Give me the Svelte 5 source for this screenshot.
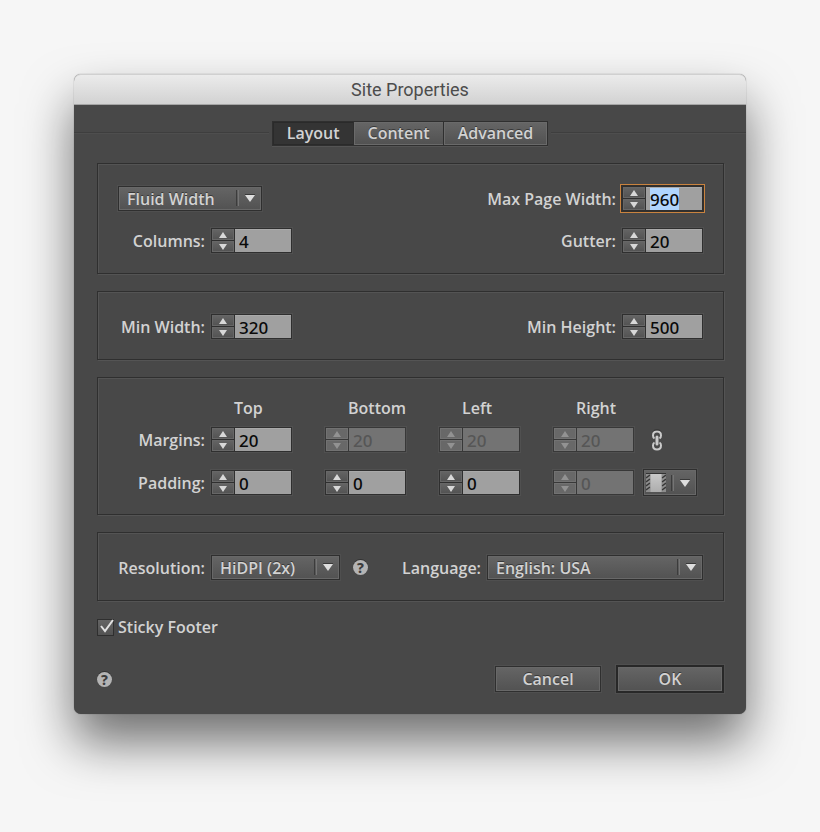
<script lang="ts">
    import { onMount } from "svelte";

    type Edge = {
        name: string;
        margin: number;
        padding: number;
        marginOff: boolean;
        paddingOff: boolean;
    };

    const tabs = ["Layout", "Content", "Advanced"];
    let tab = $state("Layout");

    let page = $state({
        width: "Fluid Width",
        columns: 4,
        maxWidth: 960,
        gutter: 20,
        minWidth: 320,
        minHeight: 500,
        resolution: "HiDPI (2x)",
        language: "English: USA",
        sticky: true,
    });

    let edges: Edge[] = $state([
        { name: "Top", margin: 20, padding: 0, marginOff: false, paddingOff: false },
        { name: "Bottom", margin: 20, padding: 0, marginOff: true, paddingOff: false },
        { name: "Left", margin: 20, padding: 0, marginOff: true, paddingOff: false },
        { name: "Right", margin: 20, padding: 0, marginOff: true, paddingOff: true },
    ]);

    onMount(() => {
        const field = document.getElementById("maxWidth") as HTMLInputElement;
        field.focus();
        field.select();
    });
</script>

{#snippet spinner(id: string, value: number, set: (n: number) => void, disabled = false, label = "")}
    <div class="spinner" class:disabled>
        <div class="steps">
            <button type="button" aria-label="Increase" tabindex="-1" {disabled} onclick={() => set(value + 1)}>
                <svg width="10" height="6" viewBox="0 0 10 6"><path d="M5 0 9 6H1z" /></svg>
            </button>
            <button type="button" aria-label="Decrease" tabindex="-1" {disabled} onclick={() => set(value - 1)}>
                <svg width="10" height="6" viewBox="0 0 10 6"><path d="M5 6 1 0h8z" /></svg>
            </button>
        </div>
        <input
            {id}
            type="text"
            inputmode="numeric"
            autocomplete="off"
            aria-label={label || undefined}
            {value}
            {disabled}
            onchange={(e) => set(Number(e.currentTarget.value) || 0)}
        />
    </div>
{/snippet}

{#snippet arrow()}
    <svg class="arrow" width="22" height="18" viewBox="0 0 22 18" aria-hidden="true">
        <path d="M.5 1v16" stroke="#3c3c3c" />
        <path d="M2.5 1v16" stroke="#757575" />
        <path d="M9 5.500h10" stroke="#393939" />
        <path d="M9 6h10l-5 7z" fill="#dedede" />
    </svg>
{/snippet}

{#snippet help()}
    <button class="help" type="button" aria-label="Help">?</button>
{/snippet}

<main>
    <form class="dialog" aria-labelledby="title" onsubmit={(e) => e.preventDefault()}>
        <header><h1 id="title">Site Properties</h1></header>

        <nav>
            <div class="tabs">
                {#each tabs as name}
                    <button type="button" class:selected={tab === name} onclick={() => (tab = name)}>{name}</button>
                {/each}
            </div>
        </nav>

        <div class="content">
            <section class="panel">
                <div class="row">
                    <div class="select fluid">
                        <select aria-label="Page width" bind:value={page.width}>
                            <option>Fluid Width</option>
                            <option>Fixed Width</option>
                        </select>
                        {@render arrow()}
                    </div>
                    <div class="field">
                        <label for="maxWidth">Max Page Width:</label>
                        {@render spinner("maxWidth", page.maxWidth, (n) => (page.maxWidth = n))}
                    </div>
                </div>
                <div class="row">
                    <div class="field">
                        <label class="first" for="columns">Columns:</label>
                        {@render spinner("columns", page.columns, (n) => (page.columns = n))}
                    </div>
                    <div class="field">
                        <label for="gutter">Gutter:</label>
                        {@render spinner("gutter", page.gutter, (n) => (page.gutter = n))}
                    </div>
                </div>
            </section>

            <section class="panel">
                <div class="row">
                    <div class="field">
                        <label class="first" for="minWidth">Min Width:</label>
                        {@render spinner("minWidth", page.minWidth, (n) => (page.minWidth = n))}
                    </div>
                    <div class="field">
                        <label for="minHeight">Min Height:</label>
                        {@render spinner("minHeight", page.minHeight, (n) => (page.minHeight = n))}
                    </div>
                </div>
            </section>

            <section class="panel">
                <div class="edgeRow heads">
                    <span></span>
                    {#each edges as edge}
                        <span class="head">{edge.name}</span>
                    {/each}
                </div>
                <div class="edgeRow">
                    <label class="first" for="marginTop">Margins:</label>
                    {#each edges as edge}
                        {@render spinner("margin" + edge.name, edge.margin, (n) => (edge.margin = n), edge.marginOff, "Margin " + edge.name)}
                    {/each}
                    <button class="link" type="button" aria-label="Link margins">
                        <svg width="12" height="22" viewBox="0 0 12 22" fill="none" aria-hidden="true">
                            <path
                                d="M3.500 9.500C2.300 8.800 2 8 2 6.500 2 4 3.500 2.500 6 2.500S10 4 10 6.500c0 1.500-.3 2.300-1.500 3M3.500 13.500c-1.200.7-1.500 1.500-1.500 3 0 2.500 1.500 4 4 4s4-1.500 4-4c0-1.500-.3-2.300-1.500-3"
                                stroke="#cacaca"
                                stroke-width="2"
                            />
                            <path d="M6 8v7" stroke="#cacaca" stroke-width="3" stroke-linecap="round" />
                            <path d="M2 2.500C3 1 4.500.8 6 .8s3 .2 4 1.700" stroke="#333" />
                        </svg>
                    </button>
                </div>
                <div class="edgeRow">
                    <label class="first" for="paddingTop">Padding:</label>
                    {#each edges as edge}
                        {@render spinner("padding" + edge.name, edge.padding, (n) => (edge.padding = n), edge.paddingOff, "Padding " + edge.name)}
                    {/each}
                    <button class="mode" type="button" aria-label="Padding area" aria-haspopup="menu">
                        <svg width="20" height="20" viewBox="0 0 20 20" aria-hidden="true">
                            <defs>
                                <linearGradient id="sheet" x2="0" y2="1">
                                    <stop offset="0" stop-color="#c9c9c9" />
                                    <stop offset="1" stop-color="#adadad" />
                                </linearGradient>
                            </defs>
                            <path d="M0 1h20v18H0z" fill="#8d8d8d" />
                            <path
                                d="M0 5l4-3M0 9l4-3M0 13l4-3M0 17l4-3M16 5l4-3M16 9l4-3M16 13l4-3M16 17l4-3"
                                stroke="#383838"
                                stroke-width="1.500"
                            />
                            <path d="M0 .5h20" stroke="#333" />
                            <path d="M4.500 1h11v18h-11z" fill="url(#sheet)" />
                        </svg>
                        {@render arrow()}
                    </button>
                </div>
            </section>

            <section class="panel">
                <div class="row">
                    <div class="field">
                        <label class="first" for="resolution">Resolution:</label>
                        <div class="select resolution">
                            <select id="resolution" bind:value={page.resolution}>
                                <option>Standard</option>
                                <option>HiDPI (2x)</option>
                            </select>
                            {@render arrow()}
                        </div>
                        {@render help()}
                    </div>
                    <div class="field">
                        <label for="language">Language:</label>
                        <div class="select language">
                            <select id="language" bind:value={page.language}>
                                <option>English: USA</option>
                                <option>English: UK</option>
                            </select>
                            {@render arrow()}
                        </div>
                    </div>
                </div>
            </section>

            <label class="check">
                <span class="box">
                    <input type="checkbox" bind:checked={page.sticky} />
                    {#if page.sticky}
                        <svg width="18" height="18" viewBox="0 0 18 18" fill="none" aria-hidden="true">
                            <path d="M4 7l4 5L16 1" stroke="#e2e2e2" stroke-width="2" />
                        </svg>
                    {/if}
                </span>
                Sticky Footer
            </label>

            <footer>
                {@render help()}
                <div class="actions">
                    <button type="button">Cancel</button>
                    <button type="submit" class="ok">OK</button>
                </div>
            </footer>
        </div>
    </form>
</main>

<style>
    :global(body) {
        background: #f6f6f6;
    }

    main {
        --line: #2f2f2f;
        --light: #545454;
        --raised: linear-gradient(#656565, #525252);
        --text: #d2d2d2;

        box-sizing: border-box;
        min-height: 100vh;
        padding: 74px;
        color: var(--text);
        font: 600 16px/24px "Open Sans", "Noto Sans", sans-serif;
    }

    button,
    input,
    select {
        box-sizing: border-box;
        margin: 0;
        padding: 0;
        font: inherit;
        color: inherit;
        border-radius: 0;
        outline: none;
    }

    .dialog {
        border-radius: 7px;
        background: #484848;
        box-shadow:
            0 0 1px rgba(0, 0, 0, 0.5),
            0 28px 50px rgba(0, 0, 0, 0.55);
    }

    header {
        box-sizing: border-box;
        height: 31px;
        border-bottom: 1px solid #a5a5a5;
        border-radius: 7px 7px 0 0;
        background: linear-gradient(#ececec, #d2d2d2);
        box-shadow: inset 0 1px #d0d0d0;
    }

    h1 {
        margin: 0;
        font: 400 18px/32px Roboto, sans-serif;
        text-align: center;
        color: #4c4c4c;
    }

    nav {
        display: flex;
        align-items: center;
        gap: 3px;
        padding-top: 16px;
    }

    nav::before,
    nav::after {
        content: "";
        flex: 1;
        height: 1px;
        margin-bottom: 3px;
        background: #3e3e3e;
        box-shadow: 0 1px #4e4e4e;
    }

    .tabs {
        display: flex;
        border: 1px solid var(--line);
        box-shadow: 0 1px var(--light);
    }

    .tabs button {
        height: 23px;
        padding: 0 13px;
        border: 1px solid #6a6a6a;
        background: var(--raised);
        line-height: 21px;
        text-shadow: 0 -1px #383838;
    }

    .tabs button + button {
        box-shadow: -1px 0 var(--line);
    }

    .tabs .selected {
        border-color: #2a2a2a;
        background: #343434;
    }

    .content {
        display: flex;
        flex-direction: column;
        gap: 17px;
        padding: 17px 22px 21px 23px;
    }

    .panel {
        display: flex;
        flex-direction: column;
        gap: 17px;
        padding: 22px 20px 20px;
        border: 1px solid var(--line);
        box-shadow:
            inset 1px 1px var(--light),
            1px 1px var(--light);
    }

    .row {
        display: flex;
        justify-content: space-between;
    }

    .field {
        display: flex;
        align-items: center;
        gap: 6px;
        height: 25px;
    }

    .first {
        width: 87px;
        text-align: right;
        white-space: nowrap;
    }

    .spinner {
        box-sizing: border-box;
        display: flex;
        width: 81px;
        height: 25px;
        border: 1px solid var(--line);
        background: var(--line);
        box-shadow: 0 0 0 1px #505050;
    }

    .spinner:focus-within {
        box-shadow:
            0 0 0 1px #33302d,
            0 0 0 2px #c9833f;
    }

    .steps {
        display: flex;
        flex-direction: column;
        gap: 1px;
        width: 22px;
        margin-right: 1px;
    }

    .steps button {
        display: flex;
        flex: 1;
        align-items: center;
        justify-content: center;
        border: 0;
        background: var(--raised);
        box-shadow: inset 0 0 0 1px #676767;
    }

    .steps path {
        fill: #d8d8d8;
    }

    .spinner input {
        flex: 1;
        min-width: 0;
        padding: 2px 0 0 4px;
        border: 0;
        background: #a0a0a0;
        box-shadow: inset 0 1px #aaa;
        color: #0a0a0a;
        caret-color: transparent;
        font: 500 17px "Noto Sans", sans-serif;
    }

    .spinner input::selection {
        background: #b0d5fd;
        color: #0a0a0a;
    }

    .disabled {
        border-color: #383838;
        background: #383838;
    }

    .disabled .steps button {
        background: #686868;
        box-shadow: inset 0 0 0 1px #727272;
    }

    .disabled .steps path {
        fill: #929292;
    }

    .spinner.disabled input {
        background: #737373;
        box-shadow: none;
        color: #565656;
    }

    .select {
        position: relative;
    }

    select,
    .mode,
    .actions button {
        border: 1px solid var(--line);
        background: var(--raised);
        box-shadow:
            inset 0 0 0 1px #686868,
            0 0 0 1px #4f4f4f;
        text-shadow: 0 -1px #383838;
    }

    select {
        display: block;
        width: 100%;
        height: 25px;
        padding-left: 8px;
        appearance: none;
    }

    .select .arrow {
        position: absolute;
        top: 3px;
        right: 4px;
        pointer-events: none;
    }

    .fluid {
        width: 144px;
    }

    .resolution {
        width: 129px;
    }

    .language {
        width: 216px;
    }

    .edgeRow {
        display: grid;
        grid-template-columns: 93px 114px 114px 114px 90px auto;
        align-items: center;
        height: 25px;
    }

    .heads {
        height: 24px;
        margin-top: -4px;
        margin-bottom: -10px;
    }

    .head {
        padding-left: 23px;
    }

    .link {
        display: flex;
        width: 28px;
        justify-content: center;
        border: 0;
        background: none;
    }

    .mode {
        display: flex;
        justify-content: space-between;
        align-items: center;
        width: 54px;
        height: 27px;
        padding: 0 3px 0 2px;
    }

    .help {
        width: 15px;
        height: 15px;
        margin-left: 7px;
        border: 0;
        border-radius: 50%;
        background: #b4b4b4;
        box-shadow: 0 -1px #333;
        color: #3c3c3c;
        font: 800 14px/15px "Noto Sans", sans-serif;
    }

    .check {
        display: flex;
        align-items: center;
        gap: 4px;
        align-self: flex-start;
        height: 18px;
    }

    .box {
        position: relative;
        display: flex;
    }

    .box input {
        width: 17px;
        height: 17px;
        appearance: none;
        border: 1px solid var(--line);
        background: var(--raised);
    }

    .box svg {
        position: absolute;
        top: 0;
        left: 0;
        pointer-events: none;
    }

    footer {
        display: flex;
        align-items: center;
        justify-content: space-between;
        padding-top: 12px;
    }

    footer .help {
        margin: 0;
    }

    .actions {
        display: flex;
        align-items: center;
        gap: 15px;
    }

    .actions button {
        width: 106px;
        height: 26px;
        line-height: 24px;
    }

    .actions .ok {
        width: 108px;
        height: 28px;
        border-width: 2px;
        border-color: #282828;
    }
</style>
